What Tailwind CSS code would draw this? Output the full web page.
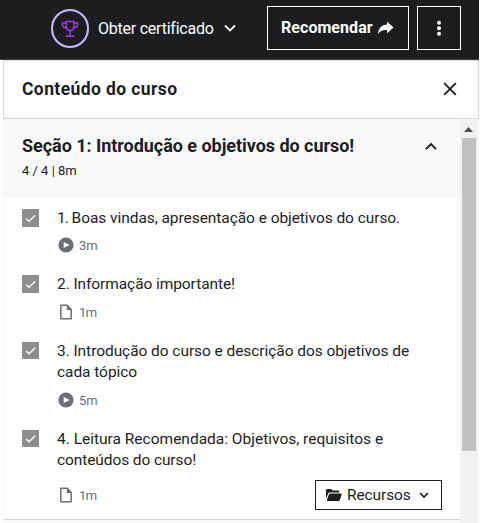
<!DOCTYPE html>
<html lang="pt">
<head>
<meta charset="utf-8">
<title>Conteúdo do curso</title>
<script src="https://cdn.jsdelivr.net/npm/@tailwindcss/browser@4"></script>
</head>
<body class="w-[480px] h-[523px] overflow-hidden bg-white font-[Roboto,sans-serif] text-[#1c1d1f]">
<svg class="hidden">
  <symbol id="check" viewBox="0 0 17 17"><path d="M4 9l3 2.800L13.200 5.800" fill="none" stroke="#fff" stroke-width="1.200"/></symbol>
  <symbol id="play" viewBox="0 0 16 16"><circle cx="8" cy="8" r="7.600" fill="#6a6f73"/><path d="M5.700 4.900v6.200l6-3.100z" fill="#fff"/></symbol>
  <symbol id="file" viewBox="0 0 16 16"><path d="M2.800 1.300h6.400L13.200 5.500v9.200H2.800z" fill="none" stroke="#6a6f73" stroke-width="1.500" stroke-linejoin="round"/><path d="M8.800 1v5H13.800z" fill="#6a6f73"/></symbol>
</svg>
<header class="flex w-[479px] h-[60px] bg-[#1c1d1f] border-b border-[#3e4143] text-white">
  <div class="ml-[51px] mt-[9px] w-[38px] h-[39px] shrink-0 rounded-full border-[2.500px] border-[#c0b6f5] outline-[0.500px] outline-[#c0b6f5] -outline-offset-[2.500px] flex items-center justify-center">
    <svg class="size-[18px]" viewBox="0 0 18 18" fill="none" stroke="#a435f0" stroke-width="1.500"><path d="M5.200 1.500h7.600v5.300c0 2.200-1.500 3.700-3.800 3.700S5.200 9 5.200 6.800zM5.200 3H1.500v1.400c0 1.900 1.500 3.200 3.700 3.500M12.800 3h3.700v1.400c0 1.900-1.500 3.200-3.700 3.500M9 10.500v5.300M4.700 16.300h8.600"/></svg>
  </div>
  <span class="ml-[9px] mt-[18px] w-[117px] shrink-0 whitespace-nowrap text-[16px] leading-[21px] tracking-[-0.230px]">Obter certificado</span>
  <svg class="ml-[9px] mt-[22px] w-[12px] h-[12px] shrink-0" viewBox="0 0 12 12" fill="none" stroke="#fff" stroke-width="1.900"><path d="M1 3.500l5 5 5-5"/></svg>
  <button class="ml-[31px] mt-[6px] w-[142px] h-[44px] shrink-0 border border-white flex items-center pl-[13px] pb-px">
    <span class="w-[91px] text-left whitespace-nowrap font-bold text-[16px] tracking-[0.050px]">Recomendar</span>
    <svg class="ml-[5px] w-[17px] h-[14px]" viewBox="0 0 17 14" fill="#fff"><path d="M10 .5L16.500 6.400 10 12.200V9C5.500 8.800 3 10 .800 13.300 1.500 7.500 4.500 4 10 3.600z"/></svg>
  </button>
  <button class="ml-2 mt-[6px] w-[44px] h-[44px] shrink-0 border border-white flex items-center justify-center">
    <svg class="w-4 h-4" viewBox="0 0 16 16" fill="#fff"><circle cx="8" cy="2.700" r="2"/><circle cx="8" cy="8.200" r="2"/><circle cx="8" cy="13.700" r="2"/></svg>
  </button>
</header>
<main class="ml-[3px] w-[476px]">
  <div class="h-[59px] border border-[#d1d7dc] flex items-center justify-between pl-[18px] pr-[21px]">
    <h2 class="font-bold text-[17.500px] tracking-[0.400px] whitespace-nowrap">Conteúdo do curso</h2>
    <svg class="size-[14px] -mt-[2px]" viewBox="0 0 14 14" stroke="#1c1d1f" stroke-width="1.900"><path d="M1.200 1.200l11.600 11.600M12.800 1.200L1.200 12.800"/></svg>
  </div>
  <div class="flex h-[404px]">
    <div class="w-[457px] h-[404px] bg-[#f7f9fa] shrink-0">
      <div class="h-[79px] pt-[16px] pl-[19px] pr-[23px]">
        <div class="flex justify-between items-center h-[22px]">
          <h3 class="font-bold text-[18px] leading-[22px] tracking-[-0.040px] whitespace-nowrap">Seção 1: Introdução e objetivos do curso!</h3>
          <svg class="size-[12px]" viewBox="0 0 12 12" fill="none" stroke="#1c1d1f" stroke-width="1.900"><path d="M1 9.200l5-5 5 5"/></svg>
        </div>
        <div class="mt-[5px] text-[13px] leading-[18px]">4 / 4 | 8m</div>
      </div>
      <ul class="h-[322px] bg-white border-b border-[#d1d7dc] border-l border-l-[#f7f9fa] text-[15.500px] leading-[21px] whitespace-nowrap">
        <li class="flex h-[66px] pl-[18px] pt-[10px]">
          <svg class="w-[17px] h-[18px] mt-px bg-[#8e8e8e]"><use href="#check"/></svg>
          <div class="ml-[18px]"><p class="tracking-[-0.060px]"><span class="tracking-[-1px]">1.</span> Boas vindas, apresentação e objetivos do curso.</p>
          <div class="flex items-center mt-[6px] h-[20px] text-[13px] text-[#6a6f73]"><svg class="ml-px size-4 mr-[5px]"><use href="#play"/></svg>3m</div></div>
        </li>
        <li class="flex h-[67px] pl-[18px] pt-[10px]">
          <svg class="w-[17px] h-[18px] mt-px bg-[#8e8e8e]"><use href="#check"/></svg>
          <div class="ml-[18px]"><p class="tracking-[-0.080px]">2. Informação importante!</p>
          <div class="flex items-center mt-[7px] h-[20px] text-[13px] text-[#6a6f73]"><svg class="ml-px size-4 mr-[5px]"><use href="#file"/></svg><span class="tracking-[-0.500px]">1m</span></div></div>
        </li>
        <li class="flex h-[88px] pl-[18px] pt-[10px]">
          <svg class="w-[17px] h-[17px] mt-px bg-[#8e8e8e]"><use href="#check"/></svg>
          <div class="ml-[18px]"><p class="tracking-[-0.060px]">3. Introdução do curso e descrição dos objetivos de<br>cada tópico</p>
          <div class="flex items-center mt-[7px] h-[20px] text-[13px] text-[#6a6f73]"><svg class="ml-px size-4 mr-[5px]"><use href="#play"/></svg>5m</div></div>
        </li>
        <li class="flex h-[100px] pl-[18px] pt-[10px]">
          <svg class="w-[17px] h-[17px] mt-px bg-[#8e8e8e] shrink-0"><use href="#check"/></svg>
          <div class="ml-[18px] w-[385px]"><p>4. Leitura Recomendada: Objetivos, requisitos e<br><span class="tracking-[-0.100px]">conteúdos do curso!</span></p>
          <div class="flex items-center mt-[9px] h-[30px] text-[13px] text-[#6a6f73]"><svg class="ml-px size-4 mr-[5px]"><use href="#file"/></svg><span class="tracking-[-0.500px]">1m</span>
            <button class="ml-auto w-[127px] h-[30px] border border-[#1c1d1f] flex items-center pl-[10px] text-[15.500px] text-[#1c1d1f]">
              <svg class="w-[16px] h-[12px] shrink-0" viewBox="0 0 16 12" fill="#1c1d1f"><path d="M0 1.300Q0 0 1.300 0H5l1.600 1.600H12q1.300 0 1.300 1.300v.7H3.600Q2.600 3.600 2.200 4.500L0 9.700zM3.900 4.500H15q1 0 .7.9L13.800 11q-.4 1-1.400 1H1.500q-1 0-.6-1L3 5.200q.3-.7.9-.7"/></svg>
              <span class="ml-[5px] w-[64px] text-left -tracking-[0.100px]">Recursos</span>
              <svg class="ml-[8px] size-[10px]" viewBox="0 0 10 10" fill="none" stroke="#1c1d1f" stroke-width="1.700"><path d="M1 3l4 4 4-4"/></svg>
            </button>
          </div></div>
        </li>
      </ul>
    </div>
    <div class="w-[17px] bg-[#f1f1f1] flex flex-col items-center shrink-0">
      <svg class="w-[9px] h-[5px] mt-[8px] shrink-0" viewBox="0 0 9 5"><path d="M4.500 0L9 5H0z" fill="#505050"/></svg>
      <div class="mt-[6px] w-[14px] h-[313px] bg-[#c1c1c1] shrink-0"></div>
    </div>
    <div class="w-[2px] bg-[#f7f7f7]"></div>
  </div>
</main>
</body>
</html>
